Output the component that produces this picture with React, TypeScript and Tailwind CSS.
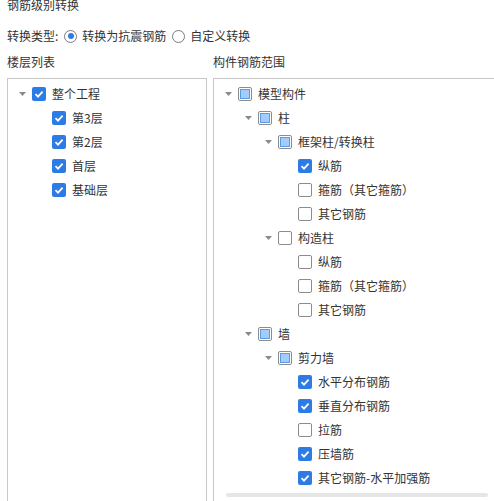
import type { ReactNode } from 'react';

type CheckState = 'checked' | 'mixed' | 'unchecked';

interface TreeRow {
    label: string;
    level: number;
    state: CheckState;
    expanded?: boolean;
}

const floorRows: TreeRow[] = [
    { label: '整个工程', level: 0, state: 'checked', expanded: true },
    { label: '第3层', level: 1, state: 'checked' },
    { label: '第2层', level: 1, state: 'checked' },
    { label: '首层', level: 1, state: 'checked' },
    { label: '基础层', level: 1, state: 'checked' },
];

const rebarRows: TreeRow[] = [
    { label: '模型构件', level: 0, state: 'mixed', expanded: true },
    { label: '柱', level: 1, state: 'mixed', expanded: true },
    { label: '框架柱/转换柱', level: 2, state: 'mixed', expanded: true },
    { label: '纵筋', level: 3, state: 'checked' },
    { label: '箍筋（其它箍筋）', level: 3, state: 'unchecked' },
    { label: '其它钢筋', level: 3, state: 'unchecked' },
    { label: '构造柱', level: 2, state: 'unchecked', expanded: true },
    { label: '纵筋', level: 3, state: 'unchecked' },
    { label: '箍筋（其它箍筋）', level: 3, state: 'unchecked' },
    { label: '其它钢筋', level: 3, state: 'unchecked' },
    { label: '墙', level: 1, state: 'mixed', expanded: true },
    { label: '剪力墙', level: 2, state: 'mixed', expanded: true },
    { label: '水平分布钢筋', level: 3, state: 'checked' },
    { label: '垂直分布钢筋', level: 3, state: 'checked' },
    { label: '拉筋', level: 3, state: 'unchecked' },
    { label: '压墙筋', level: 3, state: 'checked' },
    { label: '其它钢筋-水平加强筋', level: 3, state: 'checked' },
];

function Checkbox({ state }: { state: CheckState }) {
    if (state === 'checked') {
        return (
            <span className="flex h-[14px] w-[14px] shrink-0 items-center justify-center rounded-[2px] bg-[#2d7be5]">
                <svg width="10" height="10" viewBox="0 0 10 10">
                    <polyline points="1.5,5.2 4,7.6 8.6,2.6" fill="none" stroke="#fff" strokeWidth="1.8" />
                </svg>
            </span>
        );
    }
    if (state === 'mixed') {
        return (
            <span className="flex h-[14px] w-[14px] shrink-0 items-center justify-center rounded-[2px] border border-[#8c8c8c] bg-white">
                <span className="h-[10px] w-[10px] border border-[#5a9be8] bg-[#a3cbfb]" />
            </span>
        );
    }
    return <span className="h-[14px] w-[14px] shrink-0 rounded-[2px] border border-[#8c8c8c] bg-white" />;
}

function Radio({ checked }: { checked?: boolean }) {
    return (
        <span className="flex h-[13px] w-[13px] shrink-0 items-center justify-center rounded-full border border-[#7a7a7a] bg-white">
            {checked && <span className="h-[6px] w-[6px] rounded-full bg-[#2d7be5]" />}
        </span>
    );
}

function Tree({ rows }: { rows: TreeRow[] }) {
    return (
        <div className="pt-[3px]">
            {rows.map((row, i) => (
                <div key={i} className="flex h-6 items-center" style={{ paddingLeft: 8 + row.level * 20 }}>
                    <span className="flex w-4 shrink-0 items-center pl-[3px]">
                        {row.expanded && (
                            <svg width="7" height="4" viewBox="0 0 7 4">
                                <polygon points="0,0 7,0 3.5,4" fill="#8a8a8a" />
                            </svg>
                        )}
                    </span>
                    <Checkbox state={row.state} />
                    <span className="ml-[6px] whitespace-nowrap">{row.label}</span>
                </div>
            ))}
        </div>
    );
}

function Panel({ children, className }: { children: ReactNode; className?: string }) {
    return (
        <div className={`relative h-[440px] overflow-hidden border border-[#c8c8c8] bg-white ${className ?? ''}`}>
            {children}
        </div>
    );
}

export default function App() {
    return (
        <div
            className="h-[501px] w-[494px] overflow-hidden bg-white text-[12px] leading-4 text-[#333]"
            style={{ fontFamily: '"Noto Sans CJK SC", "Noto Sans", sans-serif' }}
        >
            <div className="-mt-[3px] pl-[7px]">钢筋级别转换</div>

            <div className="mt-[15px] flex items-center pl-[7px]">
                <span>转换类型:</span>
                <span className="ml-[6px] flex items-center gap-[5px]">
                    <Radio checked />
                    <span>转换为抗震钢筋</span>
                </span>
                <span className="ml-[6px] flex items-center gap-[5px]">
                    <Radio />
                    <span>自定义转换</span>
                </span>
            </div>

            <div className="mt-[10px] grid grid-cols-[200px_281px] gap-x-[6px] pl-[7px]">
                <div>楼层列表</div>
                <div>构件钢筋范围</div>

                <Panel className="mt-2">
                    <Tree rows={floorRows} />
                </Panel>

                <Panel className="mt-2 border-r-0">
                    <Tree rows={rebarRows} />
                    <div className="ml-[12px] mr-[6px] mt-[3px] h-[4px] rounded-full bg-[#e6e6e6]" />
                </Panel>
            </div>
        </div>
    );
}
